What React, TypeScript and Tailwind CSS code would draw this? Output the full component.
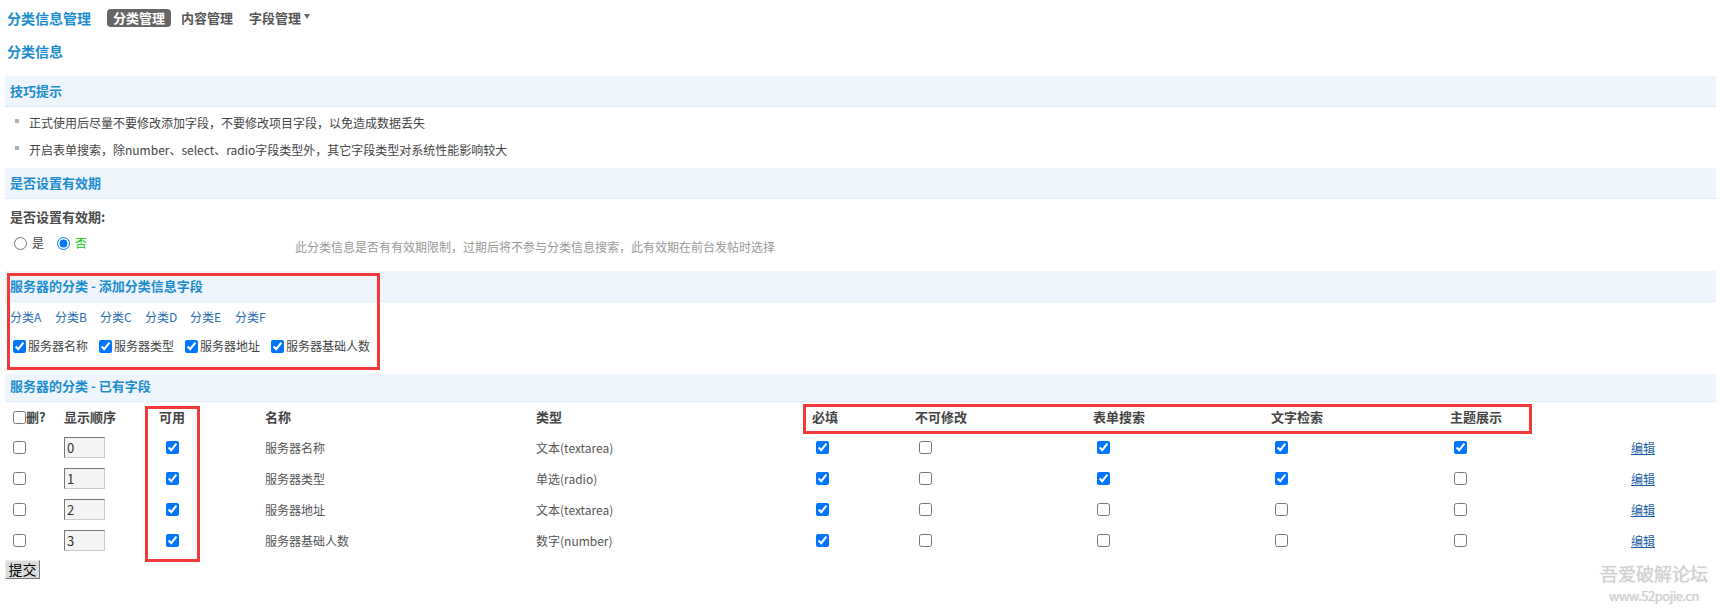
import React from "react";

type FieldRow = {
  order: string;
  name: string;
  type: string;
  required: boolean;
  locked: boolean;
  search: boolean;
  textSearch: boolean;
  title: boolean;
};

const rows: FieldRow[] = [
  { order: "0", name: "服务器名称", type: "文本(textarea)", required: true, locked: false, search: true, textSearch: true, title: true },
  { order: "1", name: "服务器类型", type: "单选(radio)", required: true, locked: false, search: true, textSearch: true, title: false },
  { order: "2", name: "服务器地址", type: "文本(textarea)", required: true, locked: false, search: false, textSearch: false, title: false },
  { order: "3", name: "服务器基础人数", type: "数字(number)", required: true, locked: false, search: false, textSearch: false, title: false },
];

const categories = ["分类A", "分类B", "分类C", "分类D", "分类E", "分类F"];
const fieldOptions = ["服务器名称", "服务器类型", "服务器地址", "服务器基础人数"];

const gridCols =
  "grid grid-cols-[59px_82px_52px_338px_276px_103px_178px_178px_179px_181px_85px]";

function Band({ title, className }: { title: string; className?: string }) {
  return (
    <div
      className={`ml-[5px] flex w-[1711px] items-center border-b border-dotted border-[#d0e0f0] bg-[#eef5fc] pl-[5px] text-[13px] font-bold text-[#1b8dcf] ${className ?? ""}`}
    >
      {title}
    </div>
  );
}

function Check({ checked, className }: { checked: boolean; className?: string }) {
  return (
    <input
      type="checkbox"
      defaultChecked={checked}
      className={`m-0 h-[13px] w-[13px] ${className ?? ""}`}
    />
  );
}

function RedBox({ className }: { className: string }) {
  return (
    <div
      className={`pointer-events-none absolute border-[3px] border-[#f23a3a] ${className}`}
    />
  );
}

export default function App() {
  return (
    <div className="relative h-[612px] w-[1721px] overflow-hidden bg-white font-['Noto_Sans_CJK_SC',sans-serif] text-[#555]">
      {/* top nav */}
      <div className="flex h-[36px] items-center pl-[7px]">
        <span className="text-[14px] font-bold text-[#1b8dcf]">分类信息管理</span>
        <span className="ml-[16px] flex h-[18px] items-center rounded-[4px] bg-[#666] px-[6px] text-[13px] font-bold text-white">
          分类管理
        </span>
        <span className="ml-[10px] text-[13px] font-bold text-[#555]">内容管理</span>
        <span className="ml-[16px] text-[13px] font-bold text-[#555]">字段管理</span>
        <span className="ml-[3px] mb-[3px] h-0 w-0 border-x-[3px] border-t-[5px] border-x-transparent border-t-[#666]" />
      </div>
      <div className="flex h-[30px] items-center pl-[7px] text-[14px] font-bold text-[#1b8dcf]">
        分类信息
      </div>

      {/* tips */}
      <Band title="技巧提示" className="mt-[10px] h-[31px]" />
      <div className="mt-[2px]">
        {[
          "正式使用后尽量不要修改添加字段，不要修改项目字段，以免造成数据丢失",
          "开启表单搜索，除number、select、radio字段类型外，其它字段类型对系统性能影响较大",
        ].map((tip) => (
          <div key={tip} className="flex h-[27px] items-center text-[12px] text-[#444]">
            <span className="mb-[3px] ml-[15px] h-[4px] w-[4px] bg-[#a9b4bd]" />
            <span className="ml-[10px]">{tip}</span>
          </div>
        ))}
      </div>

      {/* expiry */}
      <Band title="是否设置有效期" className="mt-[5px] h-[31px]" />
      <div className="flex h-[35px] items-center pl-[10px] text-[13px] font-bold text-[#4a4a4a]">
        是否设置有效期:
      </div>
      <div className="flex h-[18px] items-center text-[12px]">
        <input type="radio" name="expire" className="m-0 ml-[14px] h-[13px] w-[13px]" />
        <span className="ml-[5px] text-[#444]">是</span>
        <input type="radio" name="expire" defaultChecked className="m-0 ml-[13px] h-[13px] w-[13px]" />
        <span className="ml-[5px] text-[#00c800]">否</span>
        <span className="ml-[208px] mt-[7px] text-[#999]">
          此分类信息是否有有效期限制，过期后将不参与分类信息搜索，此有效期在前台发帖时选择
        </span>
      </div>

      {/* add fields */}
      <Band title="服务器的分类 - 添加分类信息字段" className="mt-[19px] h-[31px]" />
      <div className="flex h-[30px] items-center pl-[10px] text-[12px] text-[#2a6db3]">
        {categories.map((c) => (
          <a key={c} className="w-[45px]">
            {c}
          </a>
        ))}
      </div>
      <div className="flex h-[28px] items-center pl-[13px] text-[12px] text-[#444]">
        {fieldOptions.map((f) => (
          <label key={f} className="flex w-[86px] shrink-0 items-center whitespace-nowrap">
            <Check checked />
            <span className="ml-[2px]">{f}</span>
          </label>
        ))}
      </div>

      {/* existing fields */}
      <Band title="服务器的分类 - 已有字段" className="mt-[14px] h-[28px] pb-[3px]" />
      <div className="ml-[5px] w-[1711px]">
        <div className={`${gridCols} h-[30px] items-center text-[13px] font-bold text-[#444]`}>
          <div className="flex items-center pl-[8px]">
            <Check checked={false} />
            <span>删?</span>
          </div>
          <div>显示顺序</div>
          <div className="text-center">可用</div>
          <div className="pl-[67px]">名称</div>
          <div>类型</div>
          <div>必填</div>
          <div>不可修改</div>
          <div>表单搜索</div>
          <div>文字检索</div>
          <div>主题展示</div>
          <div />
        </div>
        {rows.map((r) => (
          <div
            key={r.name}
            className={`${gridCols} h-[31px] items-center text-[12px] text-[#555]`}
          >
            <div className="flex items-center pl-[8px]">
              <Check checked={false} />
            </div>
            <div>
              <input
                defaultValue={r.order}
                className="h-[21px] w-[41px] border border-t-[#777] border-l-[#777] border-b-[#ccc] border-r-[#ccc] bg-[#f4f4f4] pl-[2px] text-[13px] text-[#333] outline-none"
              />
            </div>
            <div className="flex justify-center">
              <Check checked />
            </div>
            <div className="pl-[67px]">{r.name}</div>
            <div>{r.type}</div>
            <div className="flex">
              <Check checked={r.required} className="ml-[4px]" />
            </div>
            <div className="flex">
              <Check checked={r.locked} className="ml-[4px]" />
            </div>
            <div className="flex">
              <Check checked={r.search} className="ml-[4px]" />
            </div>
            <div className="flex">
              <Check checked={r.textSearch} className="ml-[4px]" />
            </div>
            <div className="flex">
              <Check checked={r.title} className="ml-[4px]" />
            </div>
            <div>
              <a className="text-[#1d5ea8] underline">编辑</a>
            </div>
          </div>
        ))}
      </div>
      <div className="mt-[4px] pl-[5px]">
        <button className="flex h-[19px] w-[35px] items-center justify-center border border-t-[#eee] border-l-[#eee] border-b-[#777] border-r-[#777] bg-[#dcdcdc] text-[14px] text-black">
          提交
        </button>
      </div>

      {/* annotation boxes */}
      <RedBox className="left-[7px] top-[273px] h-[97px] w-[373px]" />
      <RedBox className="left-[145px] top-[406px] h-[156px] w-[55px]" />
      <RedBox className="left-[803px] top-[404px] h-[30px] w-[729px]" />

      {/* watermark */}
      <div className="pointer-events-none absolute left-[1600px] top-[563px] flex flex-col items-center text-[#d0d0d0] [text-shadow:0_0_2px_#fff,0_0_1px_#bbb]">
        <span className="text-[18px] leading-[20px]">吾爱破解论坛</span>
        <span className="mt-[5px] text-[13px] leading-[15px] tracking-[-0.5px]">www.52pojie.cn</span>
      </div>
    </div>
  );
}
